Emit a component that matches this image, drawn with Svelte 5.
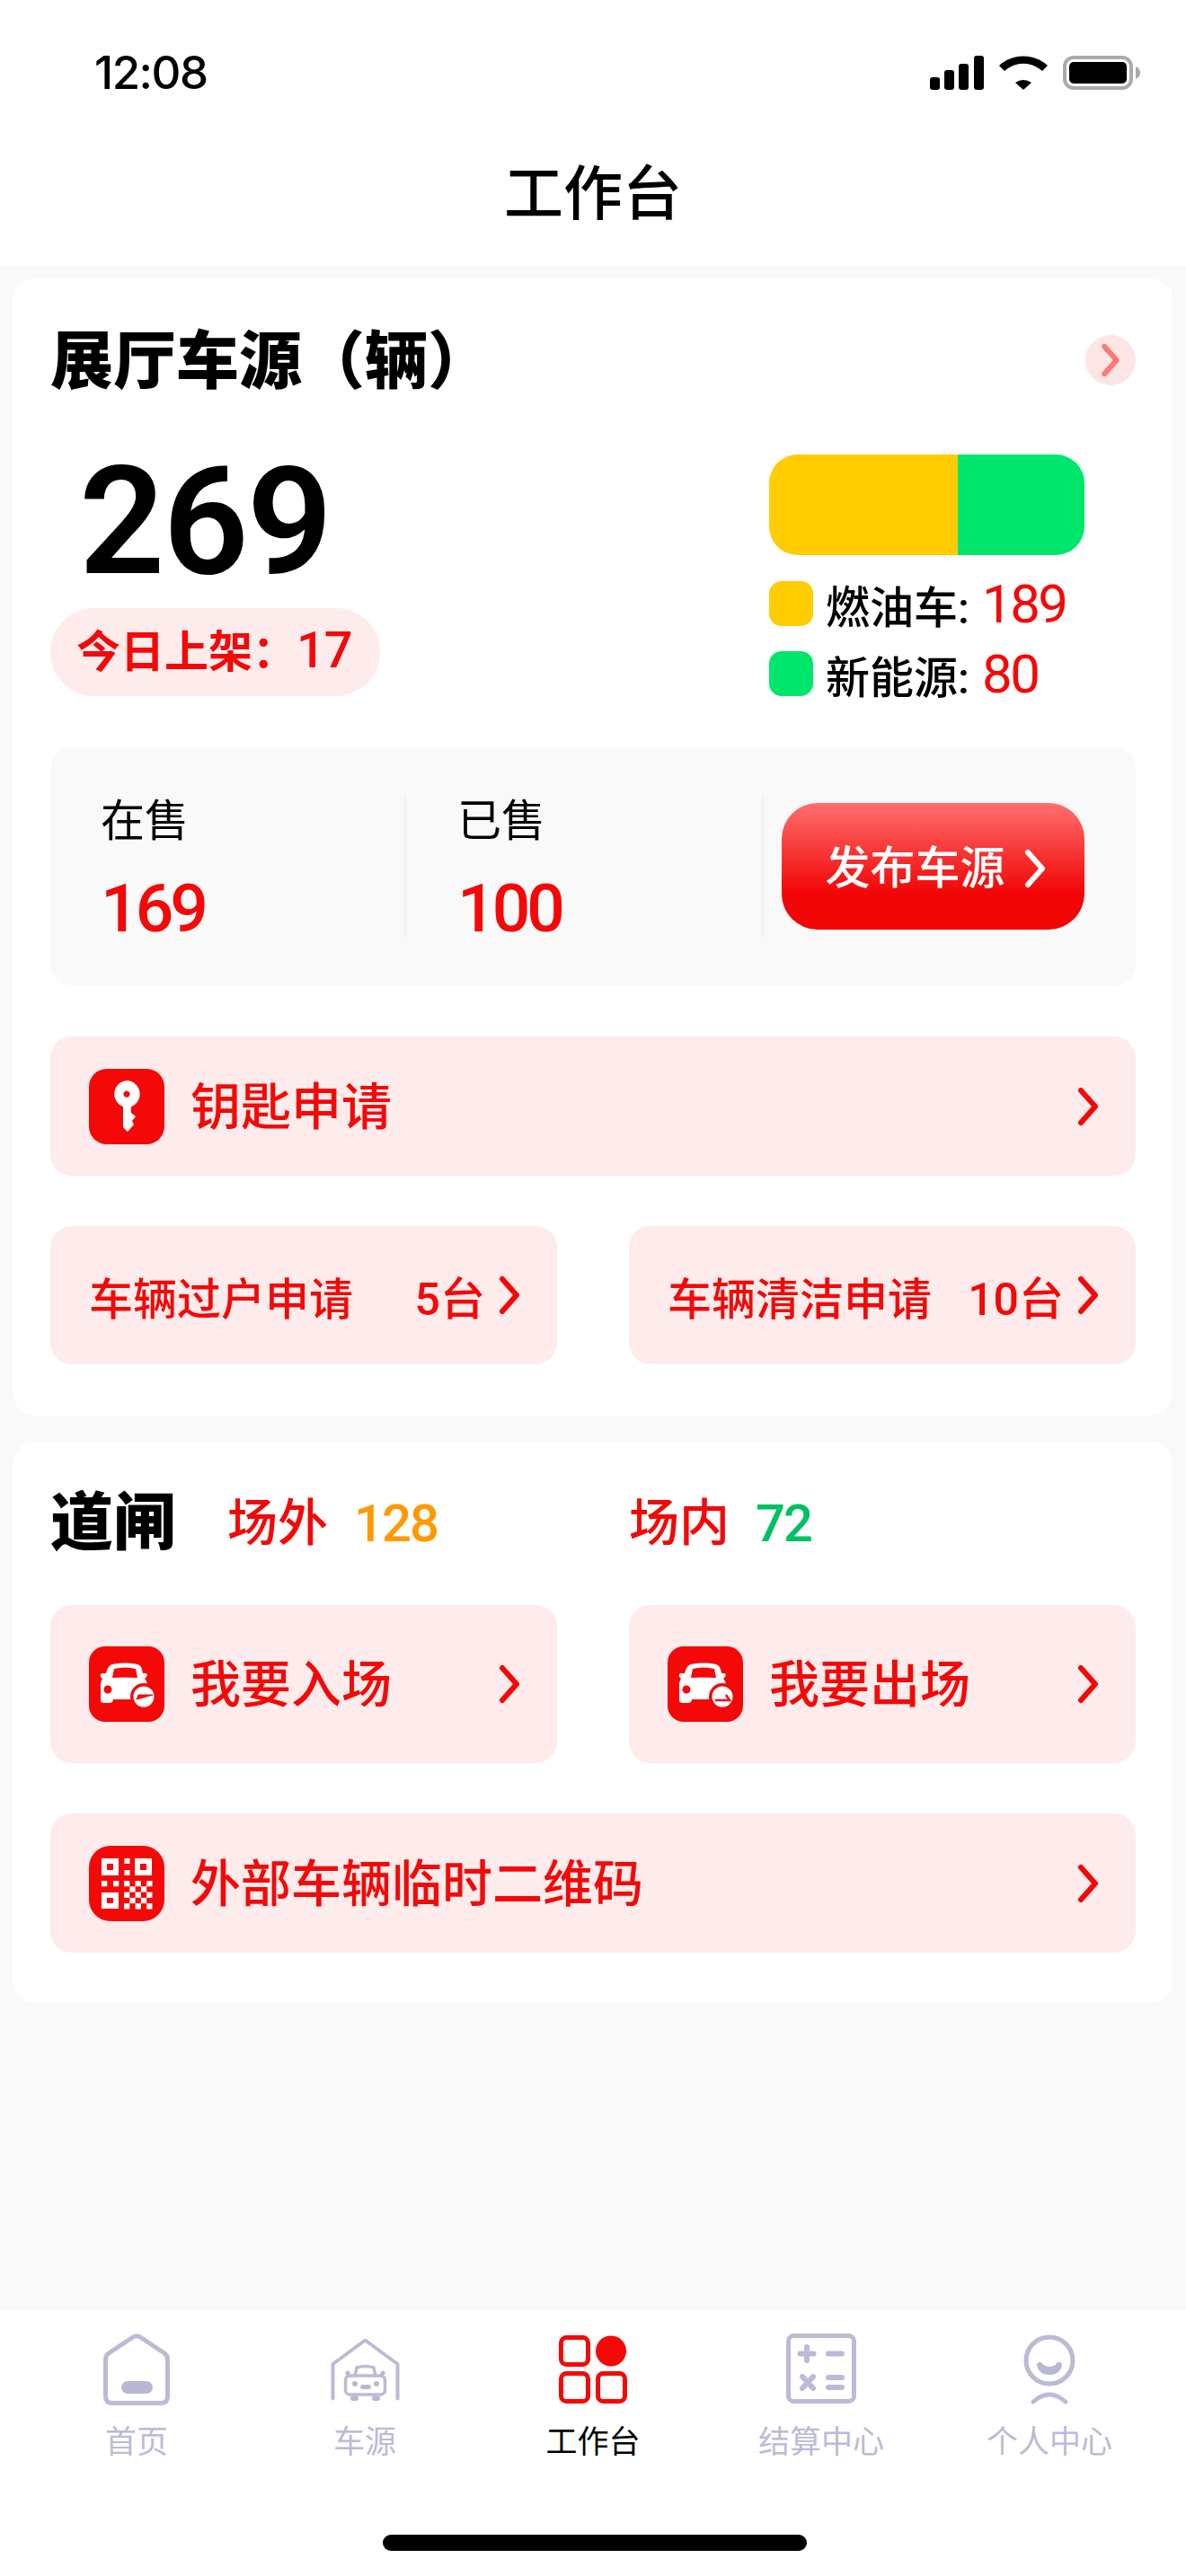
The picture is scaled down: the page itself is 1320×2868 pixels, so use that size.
<script>
  const cells = [];
  for (let r = 0; r < 5; r++) for (let c = 0; c < 5; c++) if ((r + c) % 2 === 0) cells.push([39 + c * 6.3, 39 + r * 6.3]);
</script>

{#snippet chev(cls)}
  <svg class={cls} viewBox="0 0 26 42" fill="none"><path d="M5 3 L21 21 L5 39" /></svg>
{/snippet}

{#snippet carIcon(kind)}
  <svg class="tile" viewBox="0 0 84 84">
    <rect width="84" height="84" rx="18" fill="#f40808" />
    <path d="M19 30 C21 22 24 20 28 19.5 C35 18 45 18 52 19.5 C56 20 59 22 60 30 L64 30 Q66 33 62 36 C65 39 65 42 65 48 V58 Q65 62 62 62 H56 Q54 62 54 59 H27 V60 Q26 63 23 63 H17 Q13 63 13 60 V46 C13 41 13 39 15 36 Q11 33 14 30 Z" fill="#fff" />
    <path d="M26 35 L28 25 Q40 22 52 25 L54 35 Q40 34 26 35 Z" fill="#f40808" />
    <circle cx="21" cy="48" r="4.5" fill="#f40808" />
    <circle cx="61" cy="56" r="15" fill="#f40808" />
    <circle cx="61" cy="56" r="11.5" fill="#fff" />
    {#if kind === 'in'}
      <path d="M71 54 H55 L53 59 Z" fill="#f40808" stroke="#f40808" stroke-width="1" />
    {:else}
      <path d="M53 60 H69 L65 54" fill="none" stroke="#f40808" stroke-width="2.5" />
    {/if}
  </svg>
{/snippet}

<div class="page">
  <header class="top">
    <div class="status">
      <span class="time">12:08</span>
      <div class="sys">
        <svg class="signal" viewBox="0 0 60 38"><rect x="0" y="24" width="11" height="14" rx="3"/><rect x="16" y="16" width="11" height="22" rx="3"/><rect x="32" y="9" width="11" height="29" rx="3"/><rect x="49" y="0" width="11" height="38" rx="3"/></svg>
        <svg class="wifi" viewBox="0 0 54 38"><path d="M0 11 C15 -3 39 -3 54 11 L48 17 C35 6 19 6 6 17 Z"/><path d="M18 30 Q27 24 36 30 L27 38 Z"/></svg>
        <svg class="batt" viewBox="0 0 87 38"><rect x="2" y="2" width="74" height="34" rx="10" fill="none" stroke="#aaa" stroke-width="4"/><rect x="7" y="7" width="64" height="24" rx="5"/><path d="M81 12 Q86 14 86 19 Q86 24 81 26 Z" fill="#aaa"/></svg>
      </div>
    </div>
    <h1>工作台</h1>
  </header>

  <main>
    <section class="card first">
      <div class="head">
        <h2>展厅车源（辆）</h2>
        <span class="more">{@render chev('c-more')}</span>
      </div>
      <div class="summary">
        <div class="left">
          <div class="total">269</div>
          <div class="pill">今日上架：<span class="today">17</span></div>
        </div>
        <div class="right">
          <div class="bar"><i class="fuel"></i><i class="ev"></i></div>
          <div class="legend"><b class="sw fuel"></b><span>燃油车:</span><em>189</em></div>
          <div class="legend"><b class="sw ev"></b><span>新能源:</span><em>80</em></div>
        </div>
      </div>
      <div class="stats">
        <div class="stat s1"><div class="k">在售</div><div class="v">169</div></div>
        <div class="stat s2"><div class="k">已售</div><div class="v">100</div></div>
        <button class="publish">发布车源{@render chev('c-white')}</button>
      </div>
      <div class="row wide key">
        <svg class="tile" viewBox="0 0 84 84">
          <rect width="84" height="84" rx="20" fill="#f40808" />
          <path fill="#fff" fill-rule="evenodd" d="M42 13 A15 15 0 0 1 47 42 V49 L52 53 L48 58 L50 62 L43 70 L38 65 V42 A15 15 0 0 1 42 13 Z M42 24.5 A3.6 3.6 0 1 0 42.01 24.5 Z" />
        </svg>
        <span class="label">钥匙申请</span>
        {@render chev('c-red push')}
      </div>
      <div class="pair small">
        <div class="row sm">
          <span class="sm-label">车辆过户申请</span>
          <span class="cnt">5台</span>
          {@render chev('c-red')}
        </div>
        <div class="row sm">
          <span class="sm-label">车辆清洁申请</span>
          <span class="cnt">10台</span>
          {@render chev('c-red')}
        </div>
      </div>
    </section>

    <section class="card second">
      <div class="pair gate">
        <div class="gate-l">
          <h2 class="gt">道闸</h2>
          <span class="place">场外</span><span class="num orange">128</span>
        </div>
        <div class="gate-r">
          <span class="place">场内</span><span class="num green">72</span>
        </div>
      </div>
      <div class="pair in-out">
        <div class="row tall">
          {@render carIcon('in')}
          <span class="label">我要入场</span>
          {@render chev('c-red push')}
        </div>
        <div class="row tall">
          {@render carIcon('out')}
          <span class="label">我要出场</span>
          {@render chev('c-red push')}
        </div>
      </div>
      <div class="row wide qr">
        <svg class="tile" viewBox="0 0 84 84">
          <rect width="84" height="84" rx="24" fill="#f40808" />
          <g fill="#fff">
            <path fill-rule="evenodd" d="M14 14 H33 V33 H14 Z M20 20 V27 H27 V20 Z" />
            <path fill-rule="evenodd" d="M51 14 H70 V33 H51 Z M57 20 V27 H64 V20 Z" />
            <path fill-rule="evenodd" d="M14 52 H33 V70 H14 Z M20 58 V64 H27 V58 Z" />
            <rect x="39.5" y="14" width="6" height="6" />
            <rect x="39.5" y="27" width="6" height="6" />
            <rect x="14" y="39" width="6.3" height="6.3" />
            <rect x="27" y="39" width="6.3" height="6.3" />
            {#each cells as [x, y]}
              <rect {x} {y} width="6.3" height="6.3" />
            {/each}
          </g>
        </svg>
        <span class="label">外部车辆临时二维码</span>
        {@render chev('c-red push')}
      </div>
    </section>
  </main>

  <nav class="tabs">
    <div class="tab">
      <svg class="ti" viewBox="0 0 74 80"><path class="st" stroke-width="5" d="M33 4 Q37 1.5 41 4 L68 22 Q71.5 24.5 71.5 29 V70 Q71.5 77.5 64 77.5 H10 Q2.5 77.5 2.5 70 V29 Q2.5 24.5 6 22 Z"/><rect class="fi" x="20" y="53" width="35" height="14" rx="7"/></svg>
      <span>首页</span>
    </div>
    <div class="tab">
      <svg class="ti" viewBox="0 0 77 80"><g transform="translate(0 5)"><path class="st" stroke-width="4" stroke-linecap="round" stroke-linejoin="round" d="M2.5 67.5 V29 L38.5 2.5 L74.5 29 V67.5"/><path class="st" stroke-width="3.5" d="M27 43 L29 33 Q38.5 30 48 33 L50 43"/><rect class="st" stroke-width="3.5" x="16.5" y="42" width="44" height="21" rx="5"/><circle class="fi" cx="19" cy="39" r="2.5"/><circle class="fi" cx="58" cy="39" r="2.5"/><circle class="fi" cx="27" cy="51" r="3"/><circle class="fi" cx="51" cy="51" r="3"/><rect class="fi" x="33" y="52" width="12" height="5" rx="2.5"/><rect class="fi" x="22" y="64.5" width="9" height="5.5" rx="2.7"/><rect class="fi" x="46" y="64.5" width="9" height="5.5" rx="2.7"/></g></svg>
      <span>车源</span>
    </div>
    <div class="tab on">
      <svg class="ti" viewBox="0 0 76 80"><g fill="none" stroke="#f40808" stroke-width="5"><rect x="2.5" y="4.5" width="30" height="30" rx="6"/><rect x="2.5" y="44.5" width="30" height="31" rx="6"/><rect x="43.5" y="44.5" width="30" height="31" rx="6"/></g><circle cx="58" cy="19.5" r="17" fill="#f40808"/></svg>
      <span>工作台</span>
    </div>
    <div class="tab">
      <svg class="ti" viewBox="0 0 78 80"><rect class="st" stroke-width="5" x="2.5" y="2.5" width="73" height="73" rx="6"/><g class="st" stroke-width="6" stroke-linecap="round"><path d="M23 15 V30 M15.5 22.5 H30.5 M47 22.5 H62 M47 49 H62 M47 60 H62 M18 48 L30 61 M30 48 L18 61"/></g></svg>
      <span>结算中心</span>
    </div>
    <div class="tab">
      <svg class="ti" viewBox="0 0 58 80"><circle class="st" stroke-width="5" cx="29" cy="30" r="26"/><path class="fi" d="M15 35 Q15 32 18 32 Q21 32 22.5 35 Q29 39 35.5 35 Q37 32 40 32 Q43 32 43 35 Q41 46 29 46 Q17 46 15 35 Z"/><path class="st" stroke-width="5" stroke-linecap="round" d="M11 76 Q29 60 47 76"/></svg>
      <span>个人中心</span>
    </div>
    <div class="home-bar"></div>
  </nav>
</div>

<style>
  :global(body) { margin: 0; background: #f9f9f9; }
  .page {
    width: 1320px; height: 2868px; display: flex; flex-direction: column;
    background: #f9f9f9; color: #000;
    font-family: Roboto, "Noto Sans CJK SC", sans-serif;
  }
  .top { height: 296px; background: #fff; flex: none; }
  .status { display: flex; justify-content: space-between; padding: 62px 50px 0 105px; height: 38px; align-items: center; }
  .time { font-family: Inter, sans-serif; font-weight: 500; font-size: 51px; line-height: 38px; letter-spacing: -1.5px; }
  .sys { display: flex; align-items: center; }
  .signal { width: 60px; height: 38px; margin-right: 17px; }
  .wifi { width: 54px; height: 38px; margin-right: 17px; }
  .batt { width: 87px; height: 38px; }
  h1 { margin: 75px 0 0; height: 84px; line-height: 84px; text-align: center; font-size: 66px; font-weight: 500; }

  main { flex: 1; padding: 14px 15px 0; }
  .card { background: #fff; border-radius: 24px; padding-left: 41px; padding-right: 41px; }
  .first { padding-top: 62px; padding-bottom: 57px; }
  .second { margin-top: 29px; padding-top: 60px; padding-bottom: 56px; }

  .head { display: flex; justify-content: space-between; align-items: center; height: 57px; }
  h2 { margin: 0; font-size: 70px; font-weight: 900; line-height: 78px; padding-top: 4px; }
  .more { width: 56px; height: 56px; border-radius: 50%; background: #fde5e5; display: flex; align-items: center; justify-content: center; }

  .summary { display: flex; justify-content: space-between; margin-top: 77px; height: 269px; padding-right: 57px; }
  .left { display: flex; flex-direction: column; justify-content: space-between; }
  .total { font-size: 167px; font-weight: 600; line-height: 150px; padding-left: 32px; letter-spacing: -2px; }
  .pill { height: 98px; line-height: 94px; border-radius: 49px; background: #feecec; color: #f40808; font-size: 49px; font-weight: 700; padding: 0 31px 0 29px; }
  .today { font-size: 56px; font-weight: 500; letter-spacing: -1px; }
  .right { width: 351px; }
  .bar { display: flex; height: 112px; border-radius: 32px; overflow: hidden; margin-bottom: 29px; }
  .bar .fuel { width: 210px; }
  .bar .ev { flex: 1; }
  .fuel { background: #ffcc00; }
  .ev { background: #00e66d; }
  .legend { display: flex; align-items: center; height: 50px; margin-bottom: 28px; font-size: 49px; font-weight: 500; white-space: nowrap; }
  .legend:last-child { margin-bottom: 0; }
  .sw { width: 49px; height: 50px; border-radius: 14px; margin-right: 14px; flex: none; }
  .legend em { font-style: normal; font-size: 60px; font-weight: 400; letter-spacing: -2.5px; color: #f40808; margin-left: 14px; }

  .stats { margin-top: 57px; height: 265px; background: #f9f9f9; border-radius: 24px; display: flex; align-items: center; padding-right: 57px; }
  .stat { height: 156px; box-sizing: border-box; border-right: 2px solid #f0f0f0; }
  .s1 { width: 396px; padding-left: 56px; }
  .s2 { width: 398px; padding-left: 57px; margin-right: 20px; }
  .k { font-size: 49px; line-height: 56px; }
  .v { font-size: 75px; font-weight: 500; letter-spacing: -4px; color: #f40808; line-height: 70px; margin-top: 33px; }
  .publish {
    flex: 1; height: 141px; border: 0; border-radius: 40px; color: #fff;
    background: linear-gradient(#ff6f6f, #f20505 72%);
    font-family: inherit; font-size: 50px; font-weight: 500; line-height: 60px;
    display: flex; align-items: center; justify-content: center; gap: 20px; padding: 4px 0 0 6px;
  }

  .row { background: #feebeb; border-radius: 24px; display: flex; align-items: center; box-sizing: border-box; color: #f40808; white-space: nowrap; }
  .wide { height: 155px; padding: 0 40px 0 43px; }
  .key { margin-top: 57px; }
  .tall { height: 176px; padding: 0 40px 0 43px; }
  .qr { margin-top: 56px; }
  .tile { width: 84px; height: 84px; flex: none; }
  .label { font-size: 56px; font-weight: 500; margin-left: 29px; line-height: 76px; padding-top: 2px; }

  .pair { display: grid; grid-template-columns: 564px 564px; column-gap: 80px; }
  .small { margin-top: 56px; }
  .sm { height: 154px; padding: 0 40px 0 43px; }
  .sm-label { font-size: 49px; font-weight: 500; }
  .cnt { font-size: 50px; font-weight: 500; margin-left: auto; margin-right: 14px; }

  .gate { grid-template-rows: 62px; align-items: center; }
  .gate-l, .gate-r { display: flex; align-items: center; white-space: nowrap; height: 62px; }
  .gt { font-size: 70px; margin: 0 59px 0 0; width: 138px; line-height: 62px; padding: 0; }
  .place { font-size: 56px; font-weight: 500; color: #f40808; line-height: 62px; }
  .num { font-size: 58px; font-weight: 500; letter-spacing: -2px; margin-left: 29px; line-height: 62px; }
  .orange { color: #ff9900; }
  .green { color: #00c060; }
  .in-out { margin-top: 60px; }

  .tabs { position: relative; height: 296px; flex: none; background: #fff; padding: 26px 25px 0; box-sizing: border-box; display: flex; align-items: flex-start; }
  .tab { flex: 1; display: flex; flex-direction: column; align-items: center; color: #bbbbd6; font-size: 35px; line-height: 44px; }
  .tab.on { color: #000; }
  .ti { height: 80px; width: auto; display: block; margin-bottom: 20px; }
  .st { fill: none; stroke: #bbbbd6; }
  .fi { fill: #b8b8d4; }
  .home-bar { position: absolute; left: 426px; width: 472px; top: 250px; height: 18px; border-radius: 9px; background: #000; }

  :global(.c-red), :global(.c-white), :global(.c-more) { fill: none; stroke-linecap: round; stroke-linejoin: round; flex: none; }
  :global(.c-red) { width: 26px; height: 44px; }
  :global(.c-red path) { stroke: #f40808; stroke-width: 6px; }
  :global(.push) { margin-left: auto; }
  :global(.c-white) { width: 26px; height: 44px; }
  :global(.c-white path) { stroke: #fff; stroke-width: 6px; }
  :global(.c-more) { width: 22px; height: 36px; }
  :global(.c-more path) { stroke: #ff7777; stroke-width: 7px; }
</style>
